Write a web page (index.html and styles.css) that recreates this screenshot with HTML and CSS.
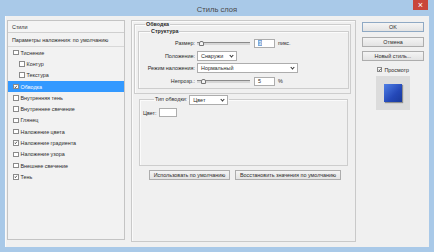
FILE: index.html
```html
<!DOCTYPE html>
<html lang="ru">
<head>
  <meta charset="UTF-8">
  <title>Стиль слоя</title>
  <link rel="stylesheet" href="styles.css">
</head>
<body>
  <div class="window">
    <div class="titlebar">
      <span class="title">Стиль слоя</span>
      <span class="close">×</span>
    </div>

    <div class="client">
      <!-- styles list -->
      <div class="styles">
        <div class="styles-head">Стили</div>
        <div class="styles-defaults">Параметры наложения: по умолчанию</div>
        <ul class="styles-list">
          <li><span class="cb"></span>Тиснение</li>
          <li class="sub"><span class="cb"></span>Контур</li>
          <li class="sub"><span class="cb"></span>Текстура</li>
          <li class="selected"><span class="cb"><svg viewBox="0 0 6 6"><path d="M1 3l1.4 1.5L5 1.2"/></svg></span>Обводка</li>
          <li><span class="cb"></span>Внутренняя тень</li>
          <li><span class="cb"></span>Внутреннее свечение</li>
          <li><span class="cb"></span>Глянец</li>
          <li><span class="cb"></span>Наложение цвета</li>
          <li><span class="cb"><svg viewBox="0 0 6 6"><path d="M1 3l1.4 1.5L5 1.2"/></svg></span>Наложение градиента</li>
          <li><span class="cb"></span>Наложение узора</li>
          <li><span class="cb"></span>Внешнее свечение</li>
          <li><span class="cb"><svg viewBox="0 0 6 6"><path d="M1 3l1.4 1.5L5 1.2"/></svg></span>Тень</li>
        </ul>
      </div>

      <!-- settings -->
      <div class="main">
        <fieldset class="group stroke">
          <legend>Обводка</legend>
          <fieldset class="group structure">
            <legend>Структура</legend>
            <div class="row">
              <span class="label">Размер:</span>
              <span class="slider"><span class="thumb"></span></span>
              <span class="field"><span class="sel-text">3</span></span>
              <span class="unit">пикс.</span>
            </div>
            <div class="row">
              <span class="label">Положение:</span>
              <span class="select select-pos">Снаружи</span>
            </div>
            <div class="row">
              <span class="label">Режим наложения:</span>
              <span class="select select-mode">Нормальный</span>
            </div>
            <div class="row">
              <span class="label">Непрозр.:</span>
              <span class="slider"><span class="thumb thumb-op"></span></span>
              <span class="field">5</span>
              <span class="unit">%</span>
            </div>
          </fieldset>
        </fieldset>

        <fieldset class="group fill-type">
          <legend><span>Тип обводки:</span><span class="select select-type">Цвет</span></legend>
          <div class="color-row">
            <span>Цвет:</span>
            <span class="swatch"></span>
          </div>
        </fieldset>

        <div class="main-buttons">
          <span class="btn btn-default">Использовать по умолчанию</span>
          <span class="btn btn-reset">Восстановить значения по умолчанию</span>
        </div>
      </div>

      <!-- dialog actions -->
      <div class="actions">
        <span class="btn btn-ok">OK</span>
        <span class="btn">Отмена</span>
        <span class="btn">Новый стиль...</span>
        <div class="preview-check"><span class="cb"><svg viewBox="0 0 6 6"><path d="M1 3l1.4 1.5L5 1.2"/></svg></span>Просмотр</div>
        <div class="preview"><div class="preview-square"></div></div>
      </div>
    </div>
  </div>
</body>
</html>
```

FILE: styles.css
```css
* { margin: 0; padding: 0; box-sizing: border-box; }

body {
  font-family: 'Liberation Sans', Arial, sans-serif;
  font-size: 5.4px;
  color: #2a2a2a;
  background: #a9c9e8;
}

.window {
  width: 434px; height: 252px;
  display: flex; flex-direction: column;
  background: #a9c9e8;
}

.titlebar {
  height: 16px; position: relative;
  display: flex; align-items: center; justify-content: center;
}
.title { font-size: 7.6px; color: #4a4a4a; padding-top: 2px; }
.close {
  position: absolute; top: 0; left: 413px; width: 15px; height: 10px;
  background: #c9463b; color: #fff; font-size: 9px; line-height: 10px;
  text-align: center;
}

.client {
  flex: 1; margin: 0 5px 5px;
  background: #f0f0f0;
  box-shadow: inset 1px 0 0 #fafafa;
  display: flex; gap: 6px;
  padding: 4px 5px 5px 2px;
}

/* styles list */
.styles {
  width: 118px; margin-bottom: 2px;
  border: 1px solid #c4c4c4;
  background: #f2f2f2;
}
.styles-head {
  height: 12px; line-height: 12px; padding-left: 4px;
  border-bottom: 1px solid #cfcfcf;
  background: #f4f4f4;
}
.styles-defaults {
  height: 14px; line-height: 14px; padding-left: 4px;
  border-bottom: 1px solid #d8d8d8;
}
.styles-list { list-style: none; }
.styles-list li {
  height: 11.3px; display: flex; align-items: center; gap: 2px;
  padding-left: 5px;
}
.styles-list li.sub { padding-left: 11px; }
.styles-list li.selected { background: #3399ff; color: #fff; }

.cb {
  width: 5.5px; height: 5.5px; flex: none;
  border: 1px solid #8a8a8a; background: #fff;
  display: flex;
}
.cb svg { width: 100%; height: 100%; overflow: visible; }
.cb path { fill: none; stroke: #222; stroke-width: 1.3; }

/* settings */
.main {
  width: 225px;
  border: 1px solid #c9c9c9;
  box-shadow: inset 1px 1px 0 #fafafa;
  padding: 0 4px 0 1px;
}

.group {
  border: 1px solid #cdcdcd;
  box-shadow: inset 1px 1px 0 #fbfbfb;
}
.group legend { font-weight: bold; line-height: 7px; padding: 0 1px; }

.stroke { padding: 0 1px 4px 3px; margin-left: 1px; }
.stroke > legend { margin-left: 7px; }

.structure { padding: 2px 0 1px 1px; }
.structure > legend { margin-left: 10px; }

.row { height: 12.6px; display: flex; align-items: center; }
.label { width: 57px; text-align: right; padding-right: 2px; }

.slider {
  width: 53px; height: 3px; margin-right: 4px; position: relative;
  background: linear-gradient(#8a8a8a 0 1px, #d6d6d6 1px);
}
.thumb {
  position: absolute; left: 2px; top: -1px;
  width: 5px; height: 5px;
  border: 1px solid #777; border-radius: 2px 2px 0 0;
  background: #f4f4f4;
}
.thumb-op { left: 4px; }

.field {
  width: 21px; height: 9px; line-height: 7px;
  border: 1px solid #adadad; background: #fff;
  padding-left: 3px;
}
.sel-text { background: #7aa7d9; color: #fff; padding: 0 0.5px; }
.unit { margin-left: 3px; }

.select {
  height: 10px; line-height: 8px; padding-left: 3px;
  border: 1px solid #adadad; background: #fff;
  position: relative; font-weight: normal;
}
.select::after {
  content: ''; position: absolute; right: 3px; top: 2px;
  width: 2px; height: 2px;
  border: solid #333; border-width: 0 1px 1px 0;
  transform: rotate(45deg);
}
.select-pos { width: 40px; }
.select-mode { width: 101px; }
.select-type { width: 39px; margin-left: 2px; }

.fill-type {
  height: 72px; margin: 0 3px 0 6px;
  padding: 3px 0 0 3px;
}
.fill-type > legend {
  display: flex; align-items: center; margin-left: 11px;
  font-weight: normal; line-height: 11px;
}
.color-row { display: flex; align-items: center; gap: 2px; }
.swatch {
  width: 18px; height: 9px;
  border: 1px solid #adadad; background: #fff;
}

.main-buttons {
  display: flex; gap: 5px;
  margin: 4px 0 0 16px;
}

.btn {
  height: 10px; line-height: 8px; text-align: center;
  border: 1px solid #adadad;
  background: linear-gradient(#f4f4f4, #e3e3e3);
}
.btn-default { width: 81px; }
.btn-reset { width: 106px; }

/* dialog actions */
.actions {
  width: 62px; margin-top: 2px;
  display: flex; flex-direction: column; align-items: center; gap: 4.5px;
}
.actions .btn { width: 100%; }
.btn-ok { border-color: #8fa9c4; }

.preview-check { display: flex; align-items: center; gap: 2px; margin-top: 1px; }
.preview {
  width: 34px; height: 34px; margin-top: -1px;
  background: #dcdcdc;
  display: flex; align-items: center; justify-content: center;
}
.preview-square {
  width: 18px; height: 18px;
  background: linear-gradient(135deg, #4f7fe6, #2448b8 60%, #1a3a9a);
  box-shadow: 1px 1px 1px rgba(0, 0, 0, 0.35);
}
```
